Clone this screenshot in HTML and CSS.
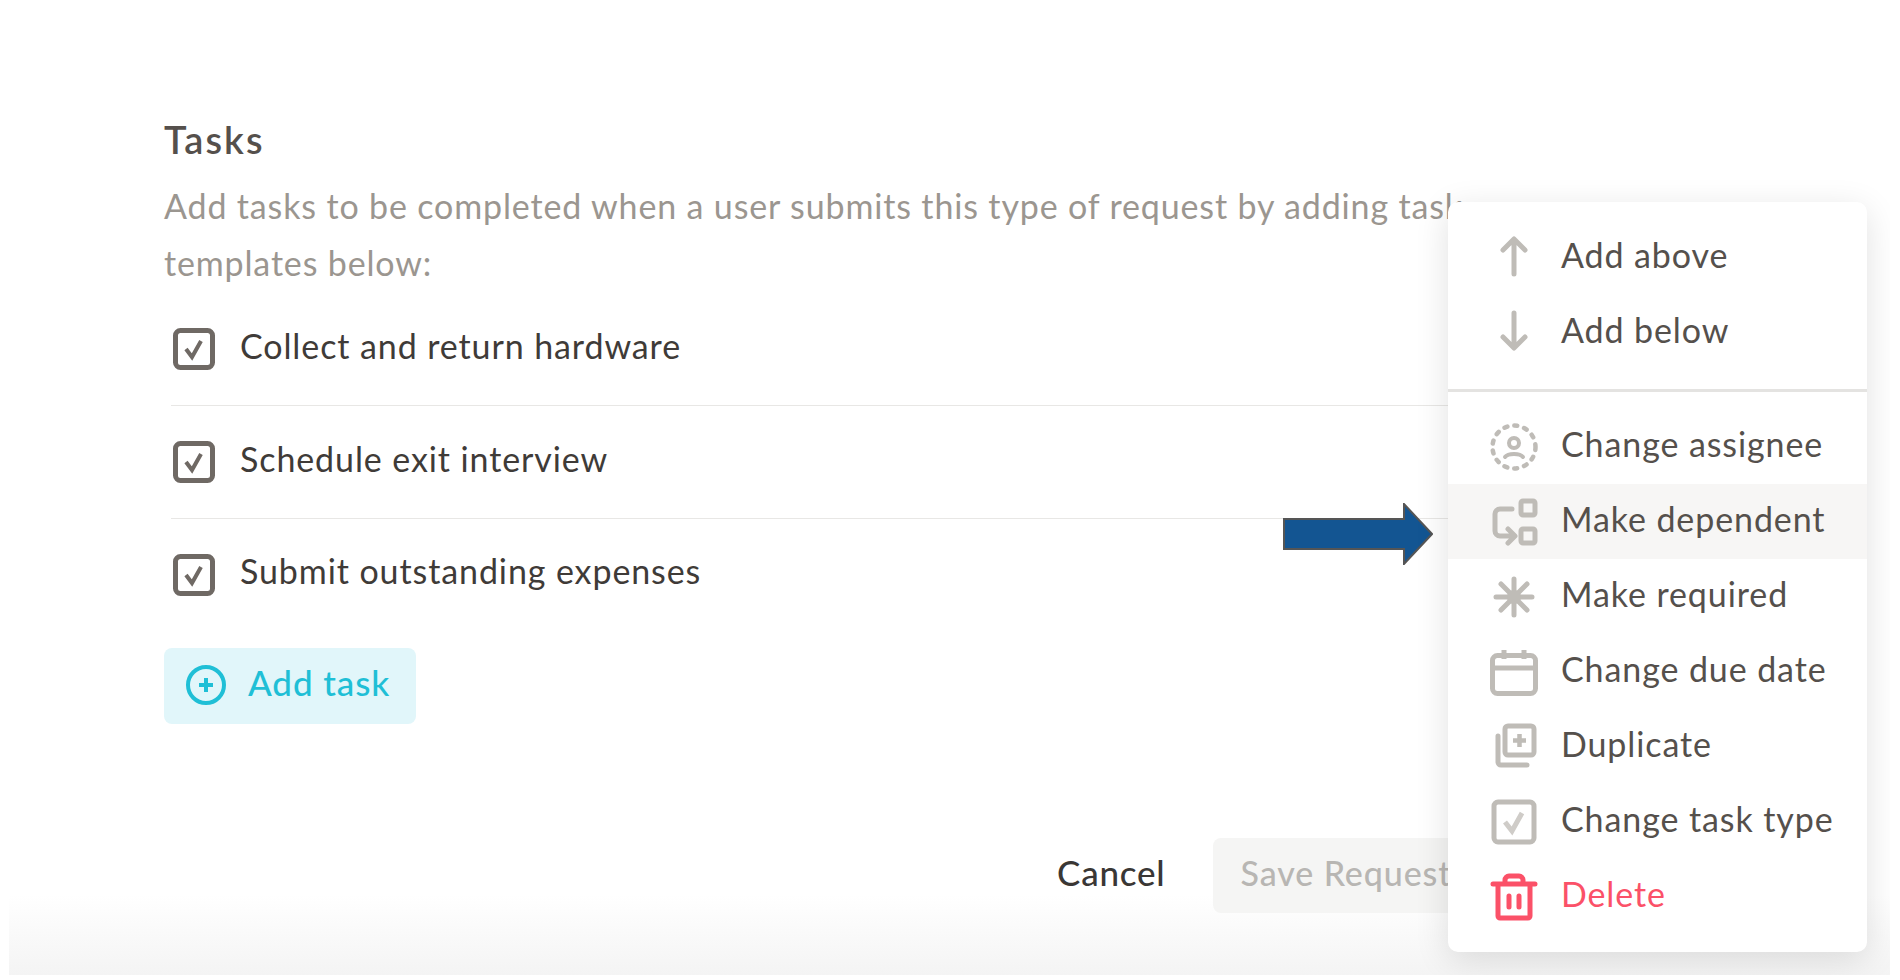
FILE: index.html
```html
<!DOCTYPE html>
<html>
<head>
  <title>Tasks</title>
  <link rel="stylesheet" href="styles.css">
</head>
<body>
  <div class="stage">
    <div class="form">
      <h2 class="form-title">Tasks</h2>
      <p class="form-desc">Add tasks to be completed when a user submits this type of request by adding task templates below:</p>
      <div class="task-row">
        <svg class="check-icon" viewBox="0 0 42 42"><rect x="2.500" y="2.500" width="37" height="37" rx="5" fill="none" stroke="#6f6964" stroke-width="5"/><path d="M13 21l6 8 9-16" fill="none" stroke="#6f6964" stroke-width="4"/></svg>
        <span>Collect and return hardware</span>
      </div>
      <div class="task-row">
        <svg class="check-icon" viewBox="0 0 42 42"><rect x="2.500" y="2.500" width="37" height="37" rx="5" fill="none" stroke="#6f6964" stroke-width="5"/><path d="M13 21l6 8 9-16" fill="none" stroke="#6f6964" stroke-width="4"/></svg>
        <span>Schedule exit interview</span>
      </div>
      <div class="task-row last">
        <svg class="check-icon" viewBox="0 0 42 42"><rect x="2.500" y="2.500" width="37" height="37" rx="5" fill="none" stroke="#6f6964" stroke-width="5"/><path d="M13 21l6 8 9-16" fill="none" stroke="#6f6964" stroke-width="4"/></svg>
        <span>Submit outstanding expenses</span>
      </div>
      <div class="add-task-btn">
        <svg class="plus-icon" viewBox="0 0 42 42"><circle cx="21" cy="21" r="18" fill="none" stroke="#1fbfd6" stroke-width="4"/><path d="M21 14v14M14 21h14" fill="none" stroke="#1fbfd6" stroke-width="4"/></svg>
        <span>Add task</span>
      </div>
      <div class="form-actions">
        <span class="cancel-btn">Cancel</span>
        <span class="save-btn">Save Request</span>
      </div>
    </div>

    <svg class="arrow" viewBox="0 0 150 62"><path d="M1 16h120V1l28 30-28 30V46H1z" fill="#135592" stroke="#555" stroke-width="2"/></svg>

    <div class="menu">
      <div class="menu-group top">
        <div class="menu-item">
          <svg class="menu-icon" viewBox="0 0 48 48"><path d="M24 42V8M13 18L24 7l11 11" fill="none" stroke="#bfbcb7" stroke-width="5" stroke-linecap="round" stroke-linejoin="round"/></svg>
          <span>Add above</span>
        </div>
        <div class="menu-item">
          <svg class="menu-icon" viewBox="0 0 48 48"><path d="M24 6v34M13 30l11 11 11-11" fill="none" stroke="#bfbcb7" stroke-width="5" stroke-linecap="round" stroke-linejoin="round"/></svg>
          <span>Add below</span>
        </div>
      </div>
      <div class="menu-group lower">
        <div class="menu-item">
          <svg class="menu-icon" viewBox="0 0 48 48"><circle cx="24" cy="24" r="21.500" fill="none" stroke="#bfbcb7" stroke-width="4.500" stroke-linecap="round" stroke-dasharray="3 7.100"/><circle cx="24" cy="20" r="5" fill="none" stroke="#bfbcb7" stroke-width="4"/><path d="M15 34c3-4 15-4 18 0" fill="none" stroke="#bfbcb7" stroke-width="4" stroke-linecap="round"/></svg>
          <span>Change assignee</span>
        </div>
        <div class="menu-item active">
          <svg class="menu-icon" viewBox="0 0 48 48"><rect x="31" y="3" width="14" height="14" rx="2" fill="none" stroke="#bfbcb7" stroke-width="5"/><rect x="31" y="31" width="14" height="14" rx="2" fill="none" stroke="#bfbcb7" stroke-width="5"/><path d="M22 11H10a5 5 0 0 0-5 5v17a5 5 0 0 0 5 5h14M18 31l7 7-7 7" fill="none" stroke="#bfbcb7" stroke-width="5" stroke-linecap="round" stroke-linejoin="round"/></svg>
          <span>Make dependent</span>
        </div>
        <div class="menu-item">
          <svg class="menu-icon" viewBox="0 0 48 48"><path d="M24 6v36M6 24h36M11 11l26 26M37 11L11 37" fill="none" stroke="#bfbcb7" stroke-width="5" stroke-linecap="round"/><circle cx="24" cy="24" r="7" fill="#bfbcb7"/></svg>
          <span>Make required</span>
        </div>
        <div class="menu-item">
          <svg class="menu-icon" viewBox="0 0 48 48"><rect x="2.500" y="7.500" width="43" height="38" rx="5" fill="none" stroke="#bfbcb7" stroke-width="5"/><path d="M2 20h44M14 2v9M34 2v9" fill="none" stroke="#bfbcb7" stroke-width="5"/></svg>
          <span>Change due date</span>
        </div>
        <div class="menu-item">
          <svg class="menu-icon" viewBox="0 0 48 48"><rect x="15" y="3" width="29" height="29" rx="3" fill="none" stroke="#bfbcb7" stroke-width="5"/><path d="M29.500 11v13M23 17.500h13" fill="none" stroke="#bfbcb7" stroke-width="4.500"/><path d="M8 13v26a3 3 0 0 0 3 3h26" fill="none" stroke="#bfbcb7" stroke-width="5" stroke-linecap="round"/></svg>
          <span>Duplicate</span>
        </div>
        <div class="menu-item">
          <svg class="menu-icon" viewBox="0 0 48 48"><rect x="4" y="4" width="40" height="40" rx="4" fill="none" stroke="#bfbcb7" stroke-width="5"/><path d="M15 24l7 9 10-18" fill="none" stroke="#cfccc8" stroke-width="5"/></svg>
          <span>Change task type</span>
        </div>
        <div class="menu-item danger">
          <svg class="menu-icon" viewBox="0 0 48 48"><path d="M3 11h42M15 10V7a4 4 0 0 1 4-4h10a4 4 0 0 1 4 4v3M8 11v32a2 2 0 0 0 2 2h28a2 2 0 0 0 2-2V11M19 23v11M29 23v11" fill="none" stroke="#fb5168" stroke-width="5" stroke-linecap="round" stroke-linejoin="round"/></svg>
          <span>Delete</span>
        </div>
      </div>
    </div>
  </div>
</body>
</html>
```

FILE: styles.css
```css
html, body {
  margin: 0;
  height: 100%;
  background-color: #ffffff;
  overflow: hidden;
}

body {
  font-family: Lato, "Open Sans", sans-serif;
}

.stage {
  position: relative;
  width: 1881px;
  height: 975px;
  margin-left: 9px;
  overflow: hidden;
  background: linear-gradient(to bottom, #ffffff 0, #ffffff 895px, #f4f4f4 975px);
}

.form {
  box-sizing: border-box;
  width: 1700px;
  padding: 117px 0 0 155px;
}

.form-title {
  margin: 0;
  font-size: 38px;
  line-height: 44px;
  letter-spacing: 2px;
  font-weight: 600;
  color: #55504c;
}

.form-desc {
  width: 1320px;
  margin: 16px 0 2px;
  font-size: 34px;
  line-height: 57px;
  letter-spacing: 0.85px;
  color: #9b9690;
}

.task-row {
  display: flex;
  align-items: center;
  height: 112px;
  margin-left: 7px;
  gap: 25px;
  border-bottom: 1px solid #e8e7e5;
  font-size: 34px;
  letter-spacing: 0.9px;
  color: #3f3b38;
}

.task-row span {
  padding-bottom: 7px;
}

.task-row.last span {
  padding-bottom: 9px;
}

.task-row.last {
  border-bottom: none;
}

.check-icon {
  width: 42px;
  height: 42px;
  margin-left: 2px;
  margin-bottom: 1px;
}

.add-task-btn {
  display: inline-flex;
  align-items: center;
  box-sizing: border-box;
  width: 252px;
  height: 76px;
  margin-top: 17px;
  padding-left: 21px;
  gap: 21px;
  background-color: #e1f6fa;
  border-radius: 8px;
  font-size: 35px;
  letter-spacing: 0.9px;
  font-weight: 500;
  color: #1fbfd6;
}

.add-task-btn span {
  padding-bottom: 8px;
}

.plus-icon {
  width: 42px;
  height: 42px;
  margin-bottom: 2px;
}

.form-actions {
  display: flex;
  align-items: center;
  margin: 114px 0 0 893px;
  gap: 47px;
}

.cancel-btn {
  padding-bottom: 8px;
  font-size: 35px;
  letter-spacing: 0.8px;
  font-weight: 500;
  color: #3a3735;
}

.save-btn {
  box-sizing: border-box;
  height: 75px;
  line-height: 69px;
  padding: 0 28px;
  background-color: #f5f5f4;
  border-radius: 8px;
  font-size: 34px;
  letter-spacing: 0.9px;
  font-weight: 500;
  color: #b8b6b3;
  white-space: nowrap;
}

.arrow {
  position: absolute;
  left: 1274px;
  top: 503px;
  width: 150px;
  height: 62px;
}

.menu {
  position: absolute;
  left: 1439px;
  top: 202px;
  width: 419px;
  height: 750px;
  background-color: #ffffff;
  border-radius: 10px;
  box-shadow: 0 8px 34px rgba(0, 0, 0, 0.12);
}

.menu-group.top {
  padding: 16px 0 21px;
  border-bottom: 3px solid #e4e3e1;
  margin-bottom: 17px;
}

.menu-item {
  display: flex;
  align-items: center;
  height: 75px;
  padding-left: 42px;
  gap: 23px;
  font-size: 34px;
  letter-spacing: 0.9px;
  color: #55504c;
}

.menu-item span {
  padding-bottom: 3px;
}

.menu-group.lower .menu-item span {
  padding-bottom: 7px;
}

.menu-item.active {
  background-color: #f7f6f5;
}

.menu-item.danger {
  color: #fb5168;
}

.menu-icon {
  width: 48px;
  height: 48px;
  flex-shrink: 0;
}
```
